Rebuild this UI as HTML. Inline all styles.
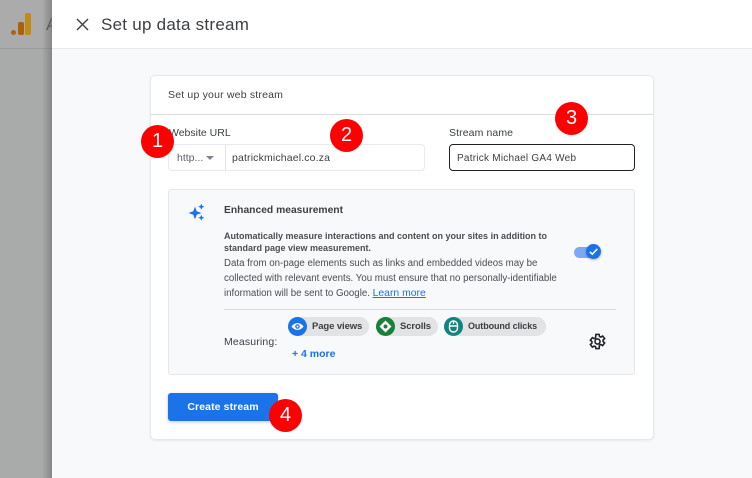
<!DOCTYPE html>
<html><head><meta charset="utf-8">
<style>
html,body{margin:0;padding:0}
body{width:752px;height:478px;overflow:hidden;position:relative;background:#f8f9fb;font-family:"Liberation Sans",sans-serif;color:#3c4043}
#w{position:absolute;left:0;top:0;width:752px;height:478px;filter:blur(.3px)}
.a{position:absolute;white-space:nowrap}
.num{position:absolute;width:33px;height:33px;border-radius:50%;background:#fe0000;color:#fff;font-size:20px;line-height:32px;text-align:center}
.chip{position:absolute;height:19px;border-radius:10px;background:#e1e3e4;top:317px}
.ci{position:absolute;width:19px;height:19px;border-radius:50%;top:317px}
</style></head><body><div id="w">
<!-- left dimmed bar -->
<div class="a" style="left:0;top:0;width:52px;height:478px;background:#a9aaaa"></div>
<div class="a" style="left:0;top:0;width:52px;height:48px;background:#ababab;border-bottom:1px solid #9c9c9c"></div>
<div class="a" style="left:42px;top:0;width:10px;height:478px;background:linear-gradient(90deg,rgba(90,90,90,0),rgba(90,90,90,.45))"></div>
<div class="a" style="left:11px;top:30px;width:5px;height:5px;border-radius:50%;background:#a9660f"></div>
<div class="a" style="left:18px;top:22px;width:6px;height:13px;border-radius:2px;background:#a9610f"></div>
<div class="a" style="left:25px;top:13px;width:6px;height:22px;border-radius:2px;background:#c08c17"></div>
<div class="a" style="left:46px;top:15px;font-size:17px;color:#5c5c5c">A</div>
<!-- header -->
<div class="a" style="left:52px;top:0;width:700px;height:48px;background:#fff;border-bottom:1px solid #e8eaed"></div>
<svg class="a" style="left:75px;top:17px" width="15" height="15" viewBox="0 0 15 15"><path d="M2 2L13 13M13 2L2 13" stroke="#3c4043" stroke-width="1.4" fill="none"/></svg>
<div class="a" style="left:101px;top:14px;font-size:17px;line-height:21px;color:#3c4043;letter-spacing:.25px">Set up data stream</div>
<!-- card -->
<div class="a" style="left:150px;top:75px;width:502px;height:363px;background:#fff;border:1px solid #e6e8ea;border-radius:5px;box-shadow:0 1px 2px rgba(60,64,67,.08)"></div>
<div class="a" style="left:151px;top:114px;width:502px;height:1px;background:#dadce0"></div>
<div class="a" style="left:168px;top:89px;font-size:10.5px;line-height:13px;color:#3c4043;letter-spacing:.19px">Set up your web stream</div>
<div class="a" style="left:169px;top:127px;font-size:10.5px;line-height:13px;color:#3c4043">Website URL</div>
<div class="a" style="left:168px;top:144px;width:255px;height:25px;border:1px solid #e8eaed;border-radius:4px;background:#fff"></div>
<div class="a" style="left:225px;top:145px;width:1px;height:25px;background:#e0e2e5"></div>
<div class="a" style="left:177px;top:152px;font-size:10.5px;line-height:13px;color:#5f6368">http...</div>
<div class="a" style="left:206px;top:156px;width:0;height:0;border-left:4px solid transparent;border-right:4px solid transparent;border-top:4px solid #80868b"></div>
<div class="a" style="left:232px;top:152px;font-size:10.5px;line-height:13px;color:#3c4043;letter-spacing:.15px">patrickmichael.co.za</div>
<div class="a" style="left:449px;top:127px;font-size:10.5px;line-height:13px;color:#3c4043;letter-spacing:.1px">Stream name</div>
<div class="a" style="left:449px;top:144px;width:184px;height:25px;border:1px solid #202124;border-radius:4px;background:#fff"></div>
<div class="a" style="left:457px;top:152px;font-size:10px;line-height:13px;color:#3c4043;letter-spacing:.24px">Patrick Michael GA4 Web</div>
<!-- enhanced box -->
<div class="a" style="left:168px;top:189px;width:465px;height:184px;background:#f8f9fb;border:1px solid #e4e6e8;border-radius:3px"></div>
<svg class="a" style="left:187px;top:202px" width="20" height="20" viewBox="0 0 20 20" fill="#1a73e8"><path d="M8 4.500L9.700 9.300 14.500 11 9.700 12.700 8 17.500 6.300 12.700 1.500 11 6.300 9.300Z"/><path d="M14.300 1.500L15.200 3.800 17.500 4.700 15.200 5.600 14.300 7.900 13.400 5.600 11.100 4.700 13.400 3.800Z"/><path d="M14.300 12.700L15.200 14.800 17.300 15.700 15.200 16.600 14.300 18.700 13.400 16.600 11.300 15.700 13.400 14.800Z"/></svg>
<div class="a" style="left:224px;top:204px;font-size:10.3px;line-height:13px;font-weight:bold;color:#3c4043">Enhanced measurement</div>
<div class="a" style="left:224px;top:230px;font-size:9px;line-height:13px;font-weight:bold;color:#4a4d51">Automatically measure interactions and content on your sites in addition to</div>
<div class="a" style="left:224px;top:242px;font-size:9px;line-height:13px;font-weight:bold;color:#4a4d51">standard page view measurement.</div>
<div class="a" style="left:224px;top:257px;font-size:9.7px;line-height:13px;color:#4a4d51">Data from on-page elements such as links and embedded videos may be</div>
<div class="a" style="left:224px;top:272px;font-size:9.7px;line-height:13px;color:#4a4d51">collected with relevant events. You must ensure that no personally-identifiable</div>
<div class="a" style="left:224px;top:287px;font-size:9.7px;line-height:13px;color:#4a4d51">information will be sent to Google. <span style="color:#1a73e8;text-decoration:underline;font-size:10.4px">Learn more</span></div>
<!-- toggle -->
<div class="a" style="left:574px;top:247px;width:24px;height:11px;border-radius:6px;background:#7ba9f2"></div>
<div class="a" style="left:586px;top:244px;width:15px;height:15px;border-radius:50%;background:#1a73e8;box-shadow:0 1px 2px rgba(0,0,0,.3)"></div>
<svg class="a" style="left:586px;top:244px" width="15" height="15" viewBox="0 0 15 15"><path d="M3.800 7.800L6.300 10.200 11.300 4.900" stroke="#fff" stroke-width="1.500" fill="none"/></svg>
<div class="a" style="left:224px;top:309px;width:392px;height:1px;background:#dadce0"></div>
<div class="a" style="left:224px;top:336px;font-size:10.5px;line-height:13px;color:#3c4043;letter-spacing:.15px">Measuring:</div>
<!-- chips -->
<div class="chip" style="left:288px;width:81px"></div>
<div class="ci" style="left:288px;background:#1a73e8"></div>
<svg class="a" style="left:288px;top:317px" width="19" height="19" viewBox="0 0 19 19"><path d="M3.500 9.500C6.500 5 12.500 5 15.500 9.500 12.500 14 6.500 14 3.500 9.500Z" fill="#fff"/><circle cx="9.500" cy="9.500" r="2.300" fill="#1a73e8"/><circle cx="9.500" cy="9.500" r="1" fill="#fff"/></svg>
<div class="a" style="left:312px;top:320px;font-size:9.5px;line-height:13px;color:#3c4043;font-weight:bold;letter-spacing:-.1px">Page views</div>
<div class="chip" style="left:376px;width:62px"></div>
<div class="ci" style="left:376px;background:#188038"></div>
<svg class="a" style="left:376px;top:317px" width="19" height="19" viewBox="0 0 19 19"><path d="M9.500 3.500L15.500 9.500 9.500 15.500 3.500 9.500Z" fill="#fff"/><circle cx="9.500" cy="9.500" r="2" fill="#188038"/></svg>
<div class="a" style="left:400px;top:320px;font-size:9.5px;line-height:13px;color:#3c4043;font-weight:bold;letter-spacing:-.1px">Scrolls</div>
<div class="chip" style="left:444px;width:102px"></div>
<div class="ci" style="left:444px;background:#12837e"></div>
<svg class="a" style="left:444px;top:317px" width="19" height="19" viewBox="0 0 19 19"><rect x="5.500" y="4" width="8" height="11" rx="4" fill="none" stroke="#fff" stroke-width="1.400"/><path d="M5.500 9H13.500M9.500 4V7" stroke="#fff" stroke-width="1.400"/></svg>
<div class="a" style="left:468px;top:320px;font-size:9px;line-height:13px;color:#3c4043;font-weight:bold;letter-spacing:-.1px">Outbound clicks</div>
<div class="a" style="left:292px;top:348px;font-size:10.5px;line-height:13px;font-weight:bold;color:#1a73e8">+ 4 more</div>
<svg class="a" style="left:588px;top:332px" width="19" height="19" viewBox="0 0 24 24"><path fill="none" stroke="#202124" stroke-width="2" d="M10 3h4l.5 2.600 1.700.8 2.300-1.300 2.500 3.300-2 1.800v1.800l2 1.800-2.500 3.300-2.300-1.300-1.700.8L14 21h-4l-.5-2.400-1.700-.8-2.300 1.300L3 15.800l2-1.800v-1.800L3 10.400l2.500-3.300 2.300 1.300 1.700-.8z"/><circle cx="12" cy="12" r="3.200" fill="none" stroke="#202124" stroke-width="2"/></svg>
<!-- button -->
<div class="a" style="left:168px;top:393px;width:110px;height:28px;background:#1a73e8;border-radius:3px;box-shadow:0 1px 3px rgba(26,115,232,.35);color:#fff;font-size:10.5px;font-weight:bold;line-height:28px;text-align:center;letter-spacing:.1px">Create stream</div>
<!-- numbers -->
<div class="num" style="left:141px;top:125px">1</div>
<div class="num" style="left:330px;top:119px">2</div>
<div class="num" style="left:555px;top:102px">3</div>
<div class="num" style="left:269px;top:399px">4</div>
</div></body></html>
